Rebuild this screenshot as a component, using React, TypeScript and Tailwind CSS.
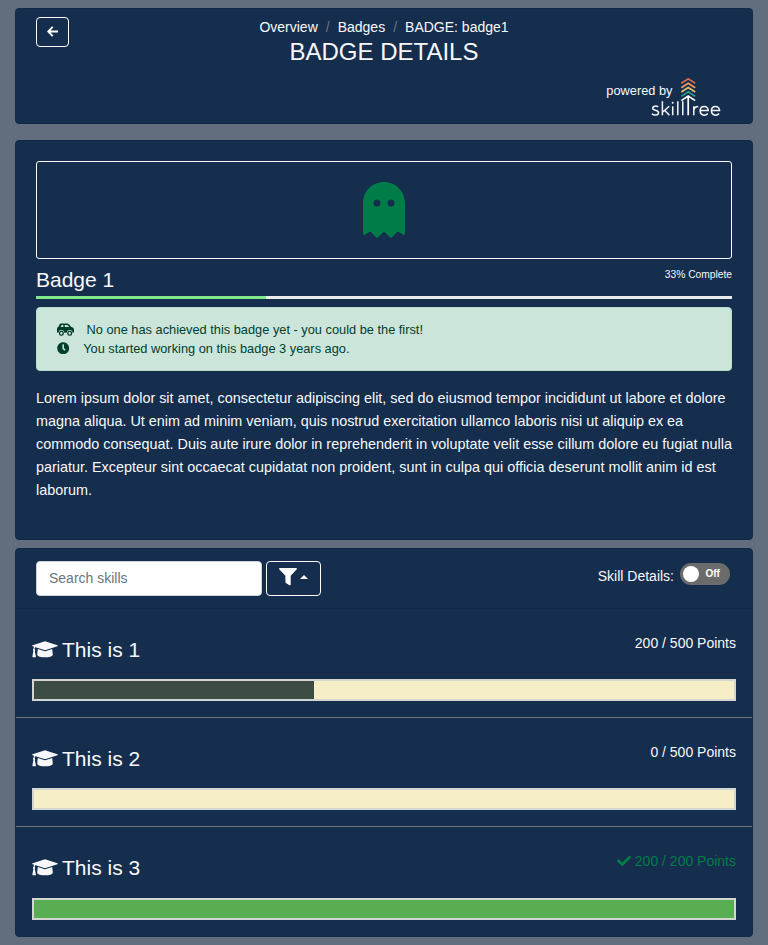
import React from 'react';
import { FaCheck, FaClock } from 'react-icons/fa';

const card = 'bg-[#152e4d] border border-[#132945] rounded-[4px]';

function ArrowIcon() {
  return (
    <svg className="-mt-[2px] -ml-px block" width="11" height="11" viewBox="0 0 11 11" fill="none" stroke="currentColor" strokeWidth="1.9">
      <path d="M11 5.5 H1.6 M5.7 .9 L1.3 5.5 L5.7 10.1" />
    </svg>
  );
}

function GhostIcon() {
  return (
    <svg className="block" width="42" height="56" viewBox="0 0 42 56" fill="#007c49">
      <path
        fillRule="evenodd"
        d="M21 0 C9 0 0 9.4 0 21 V51.5 Q0 53.5 2 52.8 L6.2 50 Q7.2 49.3 8.2 50.3 L13.2 55.5 Q14 56.3 14.8 55.5 L20 50.4 Q21 49.5 22 50.4 L27.2 55.5 Q28 56.3 28.8 55.5 L33.8 50.3 Q34.8 49.3 35.8 50 L40 52.8 Q42 53.5 42 51.5 V21 C42 9.4 33 0 21 0 Z M14 17.5 A3.5 3.5 0 1 1 14 24.5 A3.5 3.5 0 1 1 14 17.5 Z M28 17.5 A3.5 3.5 0 1 1 28 24.5 A3.5 3.5 0 1 1 28 17.5 Z"
      />
    </svg>
  );
}

function CarIcon() {
  return (
    <svg className="mr-[12.5px] block" width="17" height="13" viewBox="0 0 17 13" fill="currentColor">
      <path
        fillRule="evenodd"
        d="M4.1 .4 H10.2 Q11.2 .4 11.9 1.2 L14.3 4 Q17 4.2 17 6.3 V8.9 Q17 9.7 16.1 9.7 H15.5 A2.8 2.8 0 0 0 9.9 9.7 H7.2 A2.8 2.8 0 0 0 1.6 9.7 H.8 Q0 9.7 0 8.9 V5.5 Q0 4.1 1.3 4 L2.5 1.4 Q3 .4 4.1 .4 Z M4.6 1.9 L3.6 4 H6.3 V1.9 Z M7.8 1.9 V4 H12.2 L10.3 1.9 Z"
      />
      <circle cx="4.4" cy="10.2" r="1.9" fill="none" stroke="currentColor" strokeWidth="1.2" />
      <circle cx="12.7" cy="10.2" r="1.9" fill="none" stroke="currentColor" strokeWidth="1.2" />
    </svg>
  );
}

function FilterIcon() {
  return (
    <svg className="mt-px block" width="18" height="18" viewBox="0 0 18 18" fill="currentColor">
      <path d="M.7 0 H17.3 Q18.3 .3 17.6 1.4 L11.7 7.8 V16.6 Q11.5 17.7 10.4 17.2 L7 15 Q6.4 14.6 6.4 14 V7.8 L.4 1.4 Q-.3 .3 .7 0 Z" />
    </svg>
  );
}

function CapIcon() {
  return (
    <svg className="-mt-[2px] block" width="26" height="17" viewBox="0 0 26 17" fill="currentColor">
      <path d="M12.2 .4 Q13 .2 13.8 .4 L25.4 4.2 Q26.5 4.7 25.4 5.3 L13.8 9 Q13 9.2 12.2 9 L3.6 6.3 Q2.6 6.7 2.5 7.8 Q3.6 8.8 2.8 10 L3.9 15.5 Q4 16.2 3.3 16.2 H.9 Q.2 16.2 .4 15.5 L1.4 10 Q.5 8.8 1.5 7.8 Q1.6 6.5 2.2 5.8 L.6 5.3 Q-.5 4.7 .6 4.2 Z" />
      <path d="M5.8 8.1 L12 10.1 Q13 10.4 14 10.1 L20.2 8.1 L20.8 13.4 C20.8 17.2 5.2 17.2 5.2 13.4 Z" />
    </svg>
  );
}

function Logo() {
  return (
    <svg className="mt-px block" width="70" height="39" viewBox="0 0 70 39" fill="none">
      <g strokeWidth="1.7">
        <path d="M30.3 5.2 L37.2 .9 L44.2 5.2" stroke="#de6b52" />
        <path d="M30.3 9.7 L37.2 5.2 L44.2 9.7" stroke="#f09a5c" />
        <path d="M30.3 14 L37.2 9.5 L44.2 14" stroke="#e8bf63" />
        <path d="M30.3 18.4 L37.2 13.8 L44.2 18.4" stroke="#2a9d8f" />
        <path d="M30.3 22.6 L37.2 18 L44.2 22.6 M37.2 18 V37.2" stroke="#fff" />
      </g>
      <g stroke="#f4f4f6" strokeWidth="1.5">
        <path d="M7.2 28.9 C5.5 27.7 1.7 27.7 1.7 30.2 C1.7 33.2 7.5 31.3 7.5 34.7 C7.5 37.7 2.8 37.7 .9 35.8" />
        <path d="M11.4 23.3 V37.2 M18.2 28.2 L11.5 34.2 M13.6 32.3 L18.4 37.2" />
        <path d="M21.7 28.2 V37.2 M26.8 23.3 V37.2 M31.8 23.3 V37.2" />
        <path d="M42.8 37.2 V28.2 M42.8 33 C42.8 30 44.2 28.4 47.3 28.4" />
        <path d="M49.2 32.6 H57.3 C57.3 27 49.1 26.9 49.1 32.8 C49.1 37.5 54.5 38.3 56.7 35.5" />
        <path d="M60.5 32.6 H68.6 C68.6 27 60.4 26.9 60.4 32.8 C60.4 37.5 65.8 38.3 68 35.5" />
      </g>
      <circle cx="21.7" cy="24.8" r="1" fill="#f4f4f6" />
    </svg>
  );
}

type Skill = { name: string; points: string; percent: number; done?: boolean };

const skills: Skill[] = [
  { name: 'This is 1', points: '200 / 500 Points', percent: 40 },
  { name: 'This is 2', points: '0 / 500 Points', percent: 0 },
  { name: 'This is 3', points: '200 / 200 Points', percent: 100, done: true },
];

function SkillRow({ skill, last }: { skill: Skill; last: boolean }) {
  return (
    <li className={'h-[109px] px-4 pt-6 ' + (last ? '' : 'border-b border-[#6c757d]')}>
      <div className={'flex items-start justify-between ' + (last ? 'h-[47px]' : 'h-[46px]')}>
        <h4 className="flex items-center gap-1 pt-[4px] text-[21px] leading-[26px]">
          <CapIcon />
          {skill.name}
        </h4>
        <div className={'flex items-center gap-1 text-[14px] leading-[21px] ' + (skill.done ? 'text-[#007c49]' : '')}>
          {skill.done && <FaCheck className="-mt-px size-[14px]" />}
          <span>{skill.points}</span>
        </div>
      </div>
      <div className="h-[22px] border-2 border-[#d3d6d3] bg-[#f6eec6]">
        <div
          className={'h-full ' + (skill.done ? 'bg-[#59ad52]' : 'bg-[#3e4d44]')}
          style={{ width: `${skill.percent}%` }}
        />
      </div>
    </li>
  );
}

export default function App() {
  return (
    <main className="h-[945px] overflow-hidden bg-[#626d7d] px-[15px] pt-2 font-['Liberation_Sans',Arial,sans-serif] text-[14px] text-[#f8f8fa]">
      <header className={card + ' flex h-[116px] flex-col px-5'}>
        <div className="flex h-[68px] justify-between pt-2">
          <button className="flex h-[30px] w-[33px] items-center justify-center rounded-[4px] border border-white text-white">
            <ArrowIcon />
          </button>
          <div className="text-center">
            <nav className="flex justify-center gap-2 leading-[21px]">
              <span>Overview</span>
              <span className="text-[#6c757d]">/</span>
              <span>Badges</span>
              <span className="text-[#6c757d]">/</span>
              <span>BADGE: badge1</span>
            </nav>
            <h1 className="text-[24px] leading-[27px]">BADGE DETAILS</h1>
          </div>
          <div className="w-[33px]" />
        </div>
        <div className="flex justify-end pr-[11.5px]">
          <span className="-mr-[22px] pt-[5px] text-[12.8px] leading-[18px]">powered by</span>
          <Logo />
        </div>
      </header>

      <section className={card + ' mt-4 h-[400px] px-5 pt-5'}>
        <div className="flex h-[98px] items-center justify-center rounded-[3px] border border-white">
          <GhostIcon />
        </div>
        <div className="flex h-[37px] items-start justify-between">
          <h2 className="pt-2 text-[21px] leading-[26px]">Badge 1</h2>
          <span className="pt-2 text-[10.24px] leading-[15px]">33% Complete</span>
        </div>
        <div className="h-[3px] bg-[#e9ecef]">
          <div className="h-full w-[33%] bg-[#82e68a]" />
        </div>
        <div className="mt-2 h-[64px] rounded-[4px] border border-[#b8dacb] bg-[#cce5db] px-5 pt-3 text-[12.8px] leading-[19px] text-[#00402b]">
          <div className="flex items-center">
            <CarIcon />
            <span>No one has achieved this badge yet - you could be the first!</span>
          </div>
          <div className="flex items-center">
            <FaClock className="-mt-px mr-[13.8px] size-[12.4px]" />
            <span>You started working on this badge 3 years ago.</span>
          </div>
        </div>
        <p className="mt-4 whitespace-nowrap text-[14.4px] leading-[23px]">
          Lorem ipsum dolor sit amet, consectetur adipiscing elit, sed do eiusmod tempor incididunt ut labore et dolore<br />
          magna aliqua. Ut enim ad minim veniam, quis nostrud exercitation ullamco laboris nisi ut aliquip ex ea<br />
          commodo consequat. Duis aute irure dolor in reprehenderit in voluptate velit esse cillum dolore eu fugiat nulla<br />
          pariatur. Excepteur sint occaecat cupidatat non proident, sunt in culpa qui officia deserunt mollit anim id est<br />
          laborum.
        </p>
      </section>

      <section className={card + ' mt-2 h-[389px] overflow-hidden'}>
        <div className="flex h-[60px] items-start justify-between border-b border-[#132945] pr-[22px] pl-5 pt-3">
          <div className="flex gap-1">
            <input
              className="h-[35px] w-[226px] rounded-[4px] border border-[#ced4da] bg-white px-3 pb-[2px] text-[14px] outline-none placeholder:text-[#6c757d]"
              placeholder="Search skills"
            />
            <button className="flex h-[35px] w-[55px] items-start rounded-[4px] border border-white pt-[5px] pl-3 text-white">
              <FilterIcon />
              <span className="mt-[8px] ml-[3px] border-x-4 border-b-4 border-x-transparent border-b-white" />
            </button>
          </div>
          <div className="flex items-start gap-[6px] pt-[2px]">
            <span className="pt-[3px] leading-[21px]">Skill Details:</span>
            <span className="flex h-[22px] w-[50px] items-center rounded-full bg-[#6b6b6b] pl-[3px] text-white">
              <span className="size-4 rounded-full bg-white" />
              <span className="ml-[6.5px] text-[10px] leading-[20px] font-semibold">Off</span>
            </span>
          </div>
        </div>
        <ul>
          {skills.map((skill, index) => (
            <SkillRow key={skill.name} skill={skill} last={index === skills.length - 1} />
          ))}
        </ul>
      </section>
    </main>
  );
}
